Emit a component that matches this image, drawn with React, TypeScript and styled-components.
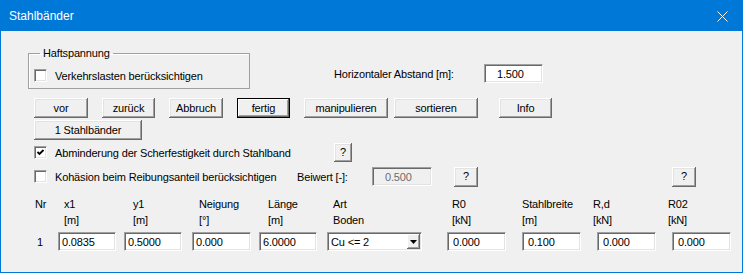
import styled, { createGlobalStyle } from "styled-components";

const GlobalStyle = createGlobalStyle`
  html, body {
    margin: 0;
    padding: 0;
    background: #ffffff;
  }
  body {
    font-family: "Liberation Sans", Arial, sans-serif;
    font-size: 11px;
    letter-spacing: -0.15px;
    color: #000;
  }
  button, input {
    letter-spacing: -0.15px;
  }
`;

const Window = styled.div`
  width: 743px;
  height: 273px;
  box-sizing: border-box;
  border: 1px solid #0078d7;
  background: #f0f0f0;
  display: flex;
  flex-direction: column;
`;

const TitleBar = styled.div`
  height: 30px;
  flex: none;
  background: #0078d7;
  color: #fff;
  display: flex;
  align-items: center;
  justify-content: space-between;
  padding: 0 14px 0 8px;
  font-family: "Segoe UI", "Liberation Sans", sans-serif;
  font-size: 12px;
  letter-spacing: 0;
`;

const Body = styled.div`
  padding-left: 33px;
  display: flex;
  flex-direction: column;
`;

const TopRow = styled.div`
  display: flex;
  align-items: flex-start;
  margin-top: 16px;
  height: 43px;
`;

const GroupBox = styled.fieldset`
  margin: 0 0 0 -6px;
  padding: 0 0 6px 5px;
  width: 222px;
  box-sizing: border-box;
  border: 1px solid #a0a0a0;
  box-shadow: inset 1px 1px 0 #fff;
  min-inline-size: 0;
`;

const Legend = styled.legend`
  margin-left: 6px;
  padding: 0 3px;
  line-height: 13px;
`;

const CheckRow = styled.label<{ $mt?: number }>`
  display: flex;
  align-items: center;
  height: 13px;
  margin-top: ${(p) => p.$mt ?? 0}px;
`;

const Box = styled.span`
  width: 13px;
  height: 13px;
  flex: none;
  box-sizing: border-box;
  background: #fff;
  border: 1px solid;
  border-color: #a0a0a0 #fff #fff #a0a0a0;
  box-shadow: inset 1px 1px 0 #696969, inset -1px -1px 0 #e3e3e3;
  display: flex;
  align-items: center;
  justify-content: center;
`;

const Text = styled.span<{ $w?: number }>`
  display: inline-block;
  white-space: nowrap;
  flex: none;
  width: ${(p) => (p.$w ? `${p.$w}px` : "auto")};
`;

const CheckText = styled(Text)`
  margin-left: 8px;
`;

const DistanceGroup = styled.div`
  display: flex;
  align-items: center;
  margin-left: 84px;
  margin-top: 17px;
`;

const Field = styled.input<{ $w?: number; $pad?: number }>`
  width: ${(p) => p.$w ?? 59}px;
  height: 19px;
  flex: none;
  box-sizing: border-box;
  margin: 0;
  padding: 0 0 0 ${(p) => p.$pad ?? 3}px;
  font-family: "Liberation Sans", Arial, sans-serif;
  font-size: 11px;
  color: #000;
  background: #fff;
  border: 1px solid;
  border-color: #a0a0a0 #fff #fff #a0a0a0;
  box-shadow: inset 1px 1px 0 #696969, inset -1px -1px 0 #e3e3e3;
  outline: none;

  &:disabled {
    background: #f0f0f0;
    color: #6d6d6d;
  }
`;

const ButtonRow = styled.div<{ $mt: number }>`
  display: flex;
  margin-top: ${(p) => p.$mt}px;
`;

const Button = styled.button<{ $w: number; $h?: number; $ml?: number; $default?: boolean }>`
  width: ${(p) => p.$w}px;
  height: ${(p) => p.$h ?? 20}px;
  flex: none;
  margin: 0 0 0 ${(p) => p.$ml ?? 0}px;
  padding: 0 0 1px;
  font-family: "Liberation Sans", Arial, sans-serif;
  font-size: 11px;
  color: #000;
  background: #f0f0f0;
  border: none;
  box-shadow: ${(p) =>
    p.$default
      ? "inset 0 0 0 1px #000, inset -2px -2px 0 #696969, inset 2px 2px 0 #fff, inset -3px -3px 0 #a0a0a0"
      : "inset -1px -1px 0 #696969, inset 1px 1px 0 #fff, inset -2px -2px 0 #a0a0a0, inset 2px 2px 0 #e3e3e3"};
`;

const OptionRow = styled.div<{ $mt: number; $h: number }>`
  display: flex;
  align-items: center;
  margin-top: ${(p) => p.$mt}px;
  height: ${(p) => p.$h}px;
`;

const HeaderGrid = styled.div`
  display: grid;
  grid-template-columns: 29px 69px 66px 69px 65px 119px 70px 71px 75px auto;
  grid-template-rows: 16px 16px;
  margin-top: 9px;
  margin-left: 1px;
  line-height: 16px;
`;

const InputGrid = styled.div`
  display: grid;
  grid-template-columns: 24px 66px 68px 67px 68px 120px 75px 75px 75px auto;
  align-items: center;
  margin-top: 4px;
  height: 19px;
`;

const RowNr = styled.span`
  padding-left: 3px;
`;

const Select = styled.div`
  width: 95px;
  height: 19px;
  box-sizing: border-box;
  background: #fff;
  border: 1px solid;
  border-color: #a0a0a0 #fff #fff #a0a0a0;
  box-shadow: inset 1px 1px 0 #696969, inset -1px -1px 0 #e3e3e3;
  display: flex;
  align-items: center;
  justify-content: space-between;
  padding: 0 1px 0 3px;
`;

const DropButton = styled.span`
  width: 13px;
  height: 15px;
  box-sizing: border-box;
  background: #f0f0f0;
  box-shadow: inset -1px -1px 0 #696969, inset 1px 1px 0 #fff, inset -2px -2px 0 #a0a0a0;
  display: flex;
  align-items: center;
  justify-content: center;
`;

const headers: [string, string][] = [
  ["Nr", ""],
  ["x1", "[m]"],
  ["y1", "[m]"],
  ["Neigung", "[°]"],
  ["Länge", "[m]"],
  ["Art", "Boden"],
  ["R0", "[kN]"],
  ["Stahlbreite", "[m]"],
  ["R,d", "[kN]"],
  ["R02", "[kN]"],
];

function CheckBox({ checked }: { checked?: boolean }) {
  return (
    <Box>
      {checked && (
        <svg width="9" height="9" viewBox="0 0 9 9">
          <path d="M1.5 4 L3.5 6 L7.5 2" fill="none" stroke="#000" strokeWidth="1.8" />
        </svg>
      )}
    </Box>
  );
}

export default function App() {
  return (
    <>
      <GlobalStyle />
      <Window>
        <TitleBar>
          <span>Stahlbänder</span>
          <svg width="11" height="11" viewBox="0 0 11 11">
            <path d="M0.5 0.5 L10.5 10.5 M10.5 0.5 L0.5 10.5" stroke="#fff" strokeWidth="1" />
          </svg>
        </TitleBar>
        <Body>
          <TopRow>
            <GroupBox>
              <Legend>Haftspannung</Legend>
              <CheckRow $mt={9}>
                <CheckBox />
                <CheckText>Verkehrslasten berücksichtigen</CheckText>
              </CheckRow>
            </GroupBox>
            <DistanceGroup>
              <Text $w={150}>Horizontaler Abstand [m]:</Text>
              <Field $w={59} $pad={12} defaultValue="1.500" />
            </DistanceGroup>
          </TopRow>

          <ButtonRow $mt={8}>
            <Button $w={54}>vor</Button>
            <Button $w={53} $ml={14}>zurück</Button>
            <Button $w={54} $ml={14}>Abbruch</Button>
            <Button $w={53} $ml={14} $default>fertig</Button>
            <Button $w={84} $ml={14}>manipulieren</Button>
            <Button $w={84} $ml={6}>sortieren</Button>
            <Button $w={53} $ml={21}>Info</Button>
          </ButtonRow>
          <ButtonRow $mt={2}>
            <Button $w={108}>1 Stahlbänder</Button>
          </ButtonRow>

          <OptionRow $mt={3} $h={19}>
            <CheckBox checked />
            <CheckText $w={279}>Abminderung der Scherfestigkeit durch Stahlband</CheckText>
            <Button $w={18} $h={19}>?</Button>
          </OptionRow>
          <OptionRow $mt={4} $h={21}>
            <CheckBox />
            <CheckText $w={242}>Kohäsion beim Reibungsanteil berücksichtigen</CheckText>
            <Text $w={75}>Beiwert [-]:</Text>
            <Field $w={60} $pad={12} defaultValue="0.500" disabled />
            <Button $w={24} $ml={22}>?</Button>
            <Button $w={24} $ml={194}>?</Button>
          </OptionRow>

          <HeaderGrid>
            {headers.map(([a]) => (
              <span key={a}>{a}</span>
            ))}
            {headers.map(([a, b]) => (
              <span key={a + "u"}>{b}</span>
            ))}
          </HeaderGrid>

          <InputGrid>
            <RowNr>1</RowNr>
            <Field $w={58} defaultValue="0.0835" />
            <Field $w={58} defaultValue="0.5000" />
            <Field $w={59} defaultValue="0.000" />
            <Field $w={58} defaultValue="6.0000" />
            <Select>
              <span>Cu &lt;= 2</span>
              <DropButton>
                <svg width="7" height="4" viewBox="0 0 7 4">
                  <path d="M0 0 H7 L3.5 4 Z" fill="#000" />
                </svg>
              </DropButton>
            </Select>
            <Field $w={59} $pad={5} defaultValue="0.000" />
            <Field $w={59} $pad={5} defaultValue="0.100" />
            <Field $w={59} $pad={5} defaultValue="0.000" />
            <Field $w={59} $pad={5} defaultValue="0.000" />
          </InputGrid>
        </Body>
      </Window>
    </>
  );
}
